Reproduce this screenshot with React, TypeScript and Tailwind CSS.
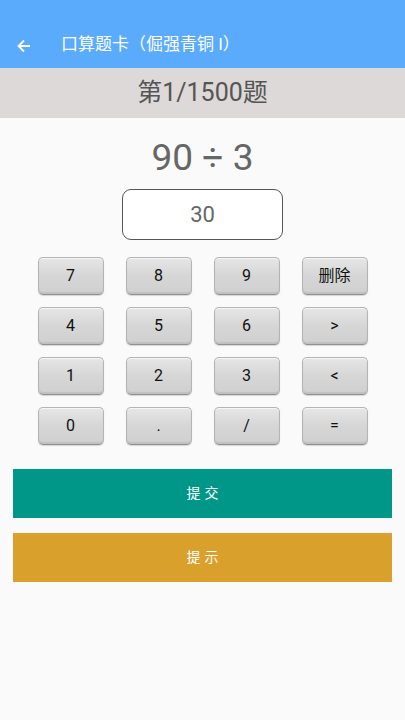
import React from "react";

const keys = ["7", "8", "9", "删除", "4", "5", "6", ">", "1", "2", "3", "<", "0", ".", "/", "="];

export default function App() {
  return (
    <div
      className="w-[405px] h-[720px] bg-[#fafafa] flex flex-col"
      style={{ fontFamily: 'Roboto, "Noto Sans CJK SC", sans-serif' }}
    >
      <div className="h-[68px] bg-[#5aabfc] flex items-end pb-[14px] shrink-0">
        <div className="w-[48px] flex justify-center">
          <svg width="16" height="16" viewBox="0 0 16 16">
            <path d="M14 8H2.5M8 2.5L2.5 8L8 13.5" stroke="white" strokeWidth="1.8" fill="none" />
          </svg>
        </div>
        <div className="ml-[13px] text-white text-[17px] leading-[20px]">口算题卡（倔强青铜 I）</div>
      </div>
      <div className="h-[50px] bg-[#dcd9d8] flex items-center justify-center text-[#555] text-[25px] shrink-0">
        第1/1500题
      </div>
      <div className="flex justify-center mt-[18px] text-[37px] leading-[44px] text-[#666]">90 ÷ 3</div>
      <div className="flex justify-center mt-[9px]">
        <div className="w-[161px] h-[51px] rounded-[9px] border-[1.5px] border-[#555] bg-white flex items-center justify-center text-[22px] text-[#666]">
          30
        </div>
      </div>
      <div className="grid grid-cols-4 gap-x-[22px] gap-y-[12px] w-[330px] ml-[37.5px] mt-[17px]">
        {keys.map((k) => (
          <div
            key={k}
            className="h-[38px] rounded-[5px] border border-[#b4b4b4] border-b-[#909090] bg-gradient-to-b from-[#e6e6e6] via-[#d6d6d6] to-[#d0d0d0] shadow-[inset_0_1px_0_#f6f6f6,inset_0_-2px_1px_#c0c0c0,0_1px_1px_rgba(0,0,0,0.15)] flex items-center justify-center text-[16px] text-[#111]"
          >
            {k}
          </div>
        ))}
      </div>
      <div className="mx-[13px] mt-[24px] h-[49px] bg-[#009688] flex items-center justify-center text-white text-[14px] tracking-[4px] pl-[4px]">
        提交
      </div>
      <div className="mx-[13px] mt-[15px] h-[49px] bg-[#d9a02c] flex items-center justify-center text-white text-[14px] tracking-[4px] pl-[4px]">
        提示
      </div>
    </div>
  );
}
